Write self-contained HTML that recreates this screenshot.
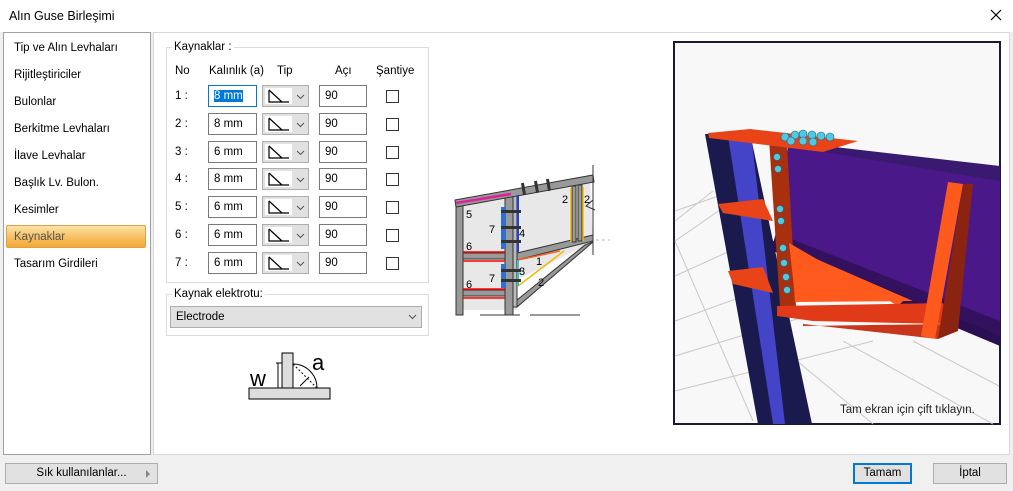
<!DOCTYPE html>
<html><head><meta charset="utf-8"><style>
*{box-sizing:border-box;margin:0;padding:0}
body{width:1013px;height:491px;background:#f0f0f0;font-family:"Liberation Sans",sans-serif;font-size:11.5px;color:#000;position:relative;overflow:hidden}
.a{position:absolute}
.tb{background:#fff;left:0;top:0;width:1013px;height:32px}
.inp{position:absolute;background:#fff;border:1px solid #7a7a7a;height:22px;padding:4px 0 0 5px;font-size:11.5px}
.sel{position:absolute;background:#e1e1e1;border:1px solid #adadad;height:22px;width:47px}
.sel .w{position:absolute;left:2px;top:2px;width:27px;height:16px;background:#fff}
.cb{position:absolute;width:13px;height:13px;border:1px solid #333;background:#fff}
.lst{position:absolute;left:14px;font-size:11.5px}
.btn{position:absolute;background:#e1e1e1;border:1px solid #adadad;height:21px;text-align:center;padding-top:3px}
</style></head><body>
<div class="a tb"></div>
<div class="a" style="left:9px;top:9px;font-size:12.5px">Alın Guse Birleşimi</div>
<svg class="a" style="left:990px;top:9px" width="12" height="12"><path d="M1 1L11 11M11 1L1 11" stroke="#000" stroke-width="1.2"/></svg>
<div class="a" style="left:3px;top:32px;width:148px;height:423px;background:#fff;border:1px solid #a0a0a0"></div>
<div class="lst" style="top:42px">Tip ve Alın Levhaları</div>
<div class="lst" style="top:69px">Rijitleştiriciler</div>
<div class="lst" style="top:96px">Bulonlar</div>
<div class="lst" style="top:123px">Berkitme Levhaları</div>
<div class="lst" style="top:150px">İlave Levhalar</div>
<div class="lst" style="top:177px">Başlık Lv. Bulon.</div>
<div class="lst" style="top:204px">Kesimler</div>
<div class="a" style="left:6px;top:225px;width:140px;height:23px;border:1px solid #d9a24a;border-radius:2px;background:linear-gradient(#fde3a8,#f8c168 50%,#f5a933)"></div>
<div class="lst" style="top:231px;color:#555">Kaynaklar</div>
<div class="lst" style="top:258px">Tasarım Girdileri</div>
<div class="a" style="left:153px;top:32px;width:857px;height:423px;background:#fff;border:1px solid #d8d8d8"></div>
<div class="a" style="left:166px;top:47px;width:263px;height:236px;border:1px solid #dcdcdc"></div>
<div class="a" style="left:172px;top:41px;background:#fff;padding:0 2px">Kaynaklar :</div>
<div class="a" style="left:175px;top:65px">No</div>
<div class="a" style="left:209px;top:65px">Kalınlık (a)</div>
<div class="a" style="left:277px;top:65px">Tip</div>
<div class="a" style="left:335px;top:65px">Açı</div>
<div class="a" style="left:376px;top:65px">Şantiye</div>
<div id="rows"></div>
<script>
var t=["8 mm","8 mm","6 mm","8 mm","6 mm","6 mm","6 mm"],h="";
for(var i=0;i<7;i++){var c=96+i*27.8,y=Math.round(c-11);
h+='<div class="a" style="left:175px;top:'+(y+5)+'px">'+(i+1)+' :</div>';
h+='<div class="inp" style="left:208px;top:'+y+'px;width:49px;'+(i==0?'border-color:#0078d7':'')+'">'+(i==0?'<span style="background:#0078d7;color:#fff">8 mm</span>':t[i])+'</div>';
h+='<div class="sel" style="left:262px;top:'+y+'px"><div class="w"><svg width="27" height="16"><path d="M4 2V14H24M4 2L17 14" stroke="#000" stroke-width="1.2" fill="none"/></svg></div><svg class="a" style="left:33px;top:8px" width="9" height="6"><path d="M1 1L4.5 4.5L8 1" stroke="#555" fill="none"/></svg></div>';
h+='<div class="inp" style="left:319px;top:'+y+'px;width:48px">90</div>';
h+='<div class="cb" style="left:386px;top:'+(y+5)+'px"></div>';}
document.getElementById("rows").innerHTML=h;
</script>
<div class="a" style="left:166px;top:294px;width:263px;height:42px;border:1px solid #dcdcdc"></div>
<div class="a" style="left:172px;top:288px;background:#fff;padding:0 2px">Kaynak elektrotu:</div>
<div class="a" style="left:170px;top:306px;width:252px;height:22px;background:#e1e1e1;border:1px solid #adadad;padding:4px 0 0 5px">Electrode</div>
<svg class="a" style="left:408px;top:314px" width="9" height="6"><path d="M1 1L4.5 4.5L8 1" stroke="#555" fill="none"/></svg>
<svg class="a" style="left:245px;top:350px" width="90" height="52">
<rect x="4" y="38" width="81" height="11" fill="#ddd" stroke="#000"/>
<rect x="37" y="3" width="11" height="35" fill="#ddd" stroke="#000"/>
<path d="M48 14A24 24 0 0 1 72 38" stroke="#000" fill="none"/>
<path d="M48 14L72 38" stroke="#000" stroke-dasharray="2 2"/>
<path d="M55 36L64 27" stroke="#000"/>
<path d="M33 13V38M31 13H37M31 38H37" stroke="#000"/>
<text x="5" y="36" font-size="22" font-family="Liberation Sans">w</text>
<text x="67" y="20" font-size="22" font-family="Liberation Sans">a</text>
</svg>
<svg class="a" style="left:440px;top:160px" width="180" height="160">
<path d="M40 155H80M90 155H140" stroke="#333"/>
<path d="M30 80H170" stroke="#bbb" stroke-dasharray="3 3"/>
<polygon points="16,43 150,20 153,82 77,120 77,150 16,150" fill="#e8e8e8"/>
<rect x="16" y="44" width="7" height="111" fill="#999" stroke="#333"/>
<rect x="65" y="36" width="8" height="119" fill="#999" stroke="#333"/>
<rect x="73" y="36" width="4" height="111" fill="#bbb" stroke="#333"/>
<polygon points="15,40 153,15 154,22 16,47" fill="#999" stroke="#333"/>
<polygon points="77,93 153,75 153,81 77,100" fill="#999" stroke="#333"/>
<polygon points="77,140 145,85 153,82 77,147" fill="#999" stroke="#333"/>
<rect x="132" y="26" width="4" height="56" fill="#999" stroke="#333"/>
<rect x="138" y="25" width="4" height="56" fill="#999" stroke="#333"/>
<path d="M131 28V82M143 27V81" stroke="#f5b800" stroke-width="1.5"/>
<path d="M153 5V95M153 40L146 46L155 50" stroke="#333" fill="none"/>
<path d="M16 43L71 34" stroke="#e0209a" stroke-width="2.5"/>
<path d="M78 35V92" stroke="#2040e0" stroke-width="2"/>
<path d="M78 100L120 91" stroke="#ff6020" stroke-width="1.5"/>
<path d="M78 126L124 91" stroke="#f5b800" stroke-width="1.5"/>
<path d="M78 100V126" stroke="#40c0c0" stroke-width="2"/>
<rect x="61" y="47" width="5" height="42" fill="#3070d0"/>
<rect x="61" y="104" width="5" height="24" fill="#3070d0"/>
<g fill="#333"><rect x="61" y="50" width="20" height="3"/><rect x="61" y="66" width="20" height="3"/><rect x="61" y="80" width="20" height="3"/><rect x="61" y="109" width="20" height="3"/><rect x="61" y="119" width="20" height="3"/></g>
<g fill="#999" stroke="#333"><rect x="23" y="93" width="42" height="6"/><rect x="23" y="130" width="42" height="6"/></g>
<path d="M23 92H65M23 101H65M23 129H65M23 138H65" stroke="#f00" stroke-width="1.5"/>
<g fill="#333"><rect x="82" y="23" width="3" height="12" transform="rotate(-10 83 29)"/><rect x="95" y="21" width="3" height="12" transform="rotate(-10 96 27)"/><rect x="107" y="19" width="3" height="12" transform="rotate(-10 108 25)"/></g>
<g font-size="11" font-family="Liberation Sans"><text x="26" y="58">5</text><text x="49" y="73">7</text><text x="79" y="77">4</text><text x="26" y="90">6</text><text x="49" y="122">7</text><text x="79" y="115">3</text><text x="26" y="128">6</text><text x="96" y="105">1</text><text x="98" y="126">2</text><text x="122" y="43">2</text><text x="144" y="43">2</text></g>
</svg>
<svg class="a" style="left:673px;top:41px" width="328" height="384">
<rect x="1" y="1" width="326" height="382" fill="#f8f8f8" stroke="#1a1a30" stroke-width="2"/>
<g stroke="#c8c8c8" fill="none"><path d="M2 180L40 150M2 200L60 160M2 235L90 195M2 280L140 230M2 350L200 300M2 200L80 380M100 300L200 383M170 300L320 383M240 300L326 345M60 150L2 170M2 315L150 270"/></g>
<polygon points="32,93 77,92 139,383 85,383" fill="#1a1a4e"/>
<polygon points="55,95 78,93 112,383 100,383" fill="#4444c8"/>
<polygon points="110,100 327,125 327,152 120,110" fill="#3a1a70"/>
<polygon points="115,105 327,140 327,290 105,200" fill="#4a1888"/>
<polygon points="103,192 327,280 327,300 100,202" fill="#34115e"/>
<polygon points="100,200 327,295 327,305 100,210" fill="#2a0f52"/>
<polygon points="96,98 114,102 123,265 107,265" fill="#a8300f"/>
<polygon points="116,202 225,265 230,260 122,255" fill="#ff5a1e"/>
<polygon points="118,207 240,260 122,261" fill="#ff5a1e"/>
<polygon points="104,265 270,262 275,283 140,280 104,275" fill="#e03a18"/>
<polygon points="130,285 275,283 265,298 130,283" fill="#c8351a"/>
<polygon points="35,92 77,88 185,100 150,111 36,97" fill="#e84418"/>
<polygon points="45,163 90,158 100,180 50,172" fill="#e84418"/>
<polygon points="55,230 90,226 100,252 60,243" fill="#e84418"/>
<polygon points="275,141 290,143 262,298 248,295" fill="#ff5a1e"/>
<polygon points="290,143 300,143 285,290 265,298" fill="#8a2410"/>
<g fill="#50c8e0" stroke="#206080" stroke-width=".6"><circle cx="112" cy="96" r="4"/><circle cx="122" cy="94" r="4"/><circle cx="130" cy="93" r="4"/><circle cx="139" cy="94" r="4"/><circle cx="148" cy="95" r="4"/><circle cx="157" cy="96" r="4"/><circle cx="118" cy="100" r="4"/><circle cx="130" cy="100" r="4"/><circle cx="140" cy="101" r="4"/><circle cx="104" cy="116" r="3.5"/><circle cx="105" cy="128" r="3.5"/><circle cx="107" cy="168" r="3.5"/><circle cx="108" cy="180" r="3.5"/><circle cx="110" cy="207" r="3.5"/><circle cx="111" cy="222" r="3.5"/><circle cx="113" cy="236" r="3.5"/><circle cx="114" cy="249" r="3.5"/></g>
<text x="167" y="372" font-size="11.5" font-family="Liberation Sans" fill="#222">Tam ekran için çift tıklayın.</text>
</svg>
<div class="btn" style="left:5px;top:463px;width:153px">Sık kullanılanlar...</div>
<svg class="a" style="left:146px;top:470px" width="5" height="8"><path d="M0 0L4 4L0 8Z" fill="#888"/></svg>
<div class="btn" style="left:853px;top:463px;width:59px;border:2px solid #0078d7;padding-top:2px">Tamam</div>
<div class="btn" style="left:933px;top:463px;width:74px">İptal</div>
</body></html>
